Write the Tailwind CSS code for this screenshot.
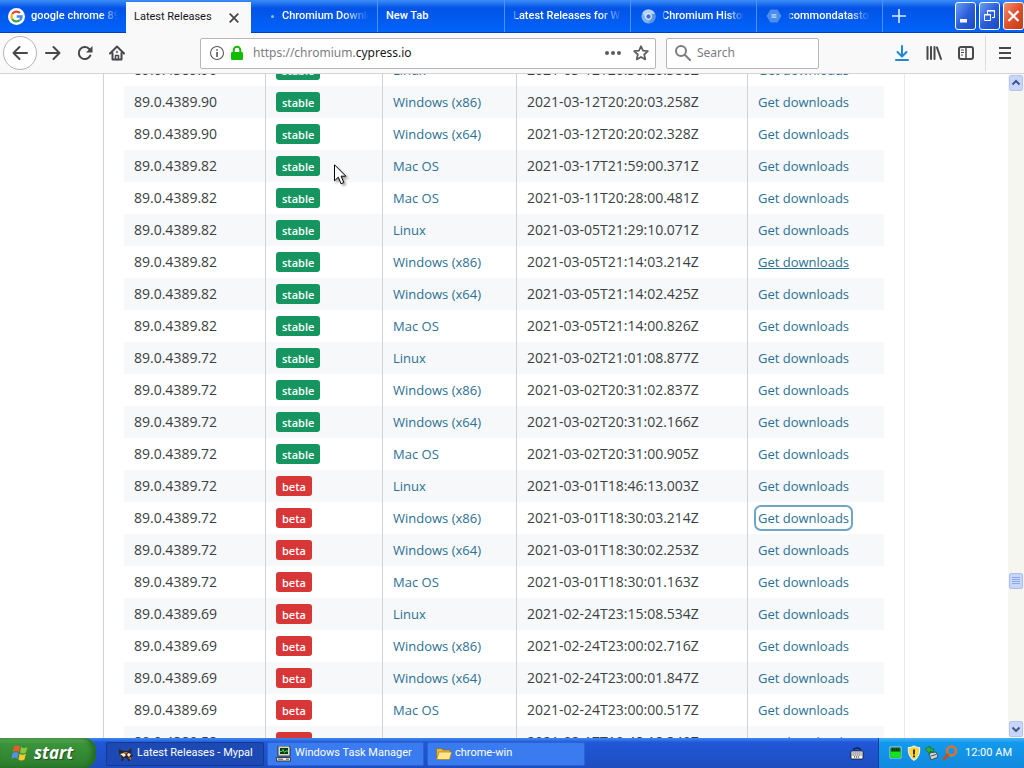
<!DOCTYPE html>
<html lang="en">
<head>
<meta charset="utf-8">
<title>Latest Releases</title>
<script src="https://cdn.jsdelivr.net/npm/@tailwindcss/browser@4"></script>
</head>
<body class="flex h-screen flex-col overflow-hidden bg-white font-['Noto_Sans',sans-serif]">

<header class="shrink-0">
  <!-- Tab strip -->
  <div class="flex h-[33px] items-stretch border-b border-[#0a3db0] bg-linear-to-b from-[#3a8cf8] via-[#0353e6] via-25% to-[#0263fa] text-[11px] text-white">
    <nav class="flex min-w-0 flex-1 font-['Roboto','Noto_Sans',sans-serif]" aria-label="Tabs">
      <a href="#" class="flex w-[126px] items-center gap-[6px] px-2 font-medium">
        <svg class="size-[17px] shrink-0" viewBox="0 0 17 17"><circle cx="8.500" cy="8.500" r="8.500" fill="#fff"/><g fill="none" stroke-width="2.300"><path d="M12 5A5 5 0 0 0 4.200 6" stroke="#ea4335"/><path d="M4.200 6a5 5 0 0 0 0 5" stroke="#fbbc05"/><path d="M4.200 11A5 5 0 0 0 12 12" stroke="#34a853"/><path d="M12 12a5 5 0 0 0 1.500-3.500H8.700" stroke="#4285f4"/></g></svg>
        <span class="overflow-hidden whitespace-nowrap [mask-image:linear-gradient(to_right,#000_80%,transparent)]">google chrome 89</span>
      </a>
      <a href="#" aria-current="page" class="mt-[2px] -mb-px flex w-[125px] items-center justify-between bg-[#f9f9fa] pr-3 pl-2 text-[#15141a]">
        <span class="whitespace-nowrap">Latest Releases</span>
        <svg class="size-[10px]" viewBox="0 0 10 10"><path d="M.7.7l8.600 8.600M9.300.7L.7 9.300" stroke="#444" stroke-width="1.700"/></svg>
      </a>
      <a href="#" class="flex w-[127px] items-center gap-2 border-r border-[#4b91f7] pr-2 pl-5 font-medium">
        <span class="size-[3px] shrink-0 rounded-full bg-[#8fc0ff]"></span>
        <span class="overflow-hidden whitespace-nowrap [mask-image:linear-gradient(to_right,#000_70%,transparent)]">Chromium Downloads</span>
      </a>
      <a href="#" class="flex w-[127px] items-center border-r border-[#4b91f7] px-2 font-medium">New Tab</a>
      <a href="#" class="flex w-[126px] items-center border-r border-[#4b91f7] px-2 font-medium">
        <span class="overflow-hidden whitespace-nowrap [mask-image:linear-gradient(to_right,transparent,#000_4%,#000_80%,transparent)]">Latest Releases for Windows</span>
      </a>
      <a href="#" class="flex w-[126px] items-center gap-[6px] border-r border-[#4b91f7] pr-3 pl-[10px] font-medium">
        <svg class="size-[15px] shrink-0" viewBox="0 0 15 15"><circle cx="7.500" cy="7.500" r="7" fill="#7fb2ee"/><path d="M1.500 4A7 7 0 0 1 14 5H7.500L5 9z" fill="#b3d2f6"/><path d="M14 5a7 7 0 0 1-7 9.500L10.500 9V5z" fill="#5b97e2"/><circle cx="7.500" cy="7.500" r="3.300" fill="#e8f2ff"/><circle cx="7.500" cy="7.500" r="2.200" fill="#3674d0"/></svg>
        <span class="overflow-hidden whitespace-nowrap [mask-image:linear-gradient(to_right,transparent,#000_5%,#000_80%,transparent)]">Chromium History</span>
      </a>
      <a href="#" class="flex w-[126px] items-center gap-[6px] border-r border-[#4b91f7] pr-3 pl-[9px] font-medium">
        <svg class="size-4 shrink-0" viewBox="0 0 16 16"><path d="M4.500 1.500h7L15.500 8l-4 6.500h-7L.5 8z" fill="#4a8dea"/><path d="M5.500 6.200h5v1.200h-5zM5.500 8.600h5v1.200h-5z" fill="#cfe2fb"/></svg>
        <span class="overflow-hidden whitespace-nowrap [mask-image:linear-gradient(to_right,transparent,#000_6%,#000_75%,transparent)]">commondatastorage</span>
      </a>
      <button aria-label="New tab" class="flex w-8 items-center justify-center"><svg class="size-[14px]" viewBox="0 0 14 14"><path d="M7 0v14M0 7h14" stroke="#dcebff" stroke-width="1.600"/></svg></button>
    </nav>
    <div class="flex items-start gap-[3px] pt-[2px]">
      <button aria-label="Minimize" class="h-7 w-[21px] rounded-[3px] border border-white bg-linear-to-br from-[#6f9cf5] via-[#2a5fdc] to-[#1b49bd]"><svg viewBox="0 0 19 26"><path d="M4 16h7v3.500H4z" fill="#fff"/></svg></button>
      <button aria-label="Restore" class="h-7 w-[21px] rounded-[3px] border border-white bg-linear-to-br from-[#6f9cf5] via-[#2a5fdc] to-[#1b49bd]"><svg viewBox="0 0 19 26" fill="none" stroke="#fff"><path d="M7.500 11V7.500h7v7H12M7 8h8M4.500 11.500h6v6h-6zM4 12h7"/></svg></button>
      <button aria-label="Close" class="h-7 w-[21px] rounded-[3px] border border-white bg-linear-to-br from-[#f0906e] via-[#e0502c] to-[#c43a17]"><svg viewBox="0 0 19 26"><path d="M4.500 8l10 10M14.500 8l-10 10" stroke="#fff" stroke-width="2.200"/></svg></button>
    </div>
  </div>

  <!-- Navigation toolbar -->
  <div class="flex h-[41px] items-center border-b border-[#d4d4d6] bg-[#f9f9fa] pl-[3px] text-[#48484b]">
    <button aria-label="Back" class="flex size-[34px] shrink-0 items-center justify-center rounded-full border border-[#b4b4b6] bg-white"><svg class="size-4" viewBox="0 0 16 16" fill="none" stroke="currentColor" stroke-width="2" stroke-linecap="round" stroke-linejoin="round"><path d="M15 8H1.500M7.500 2l-6 6 6 6"/></svg></button>
    <button aria-label="Forward" class="flex w-8 shrink-0 items-center justify-center"><svg class="size-4" viewBox="0 0 16 16" fill="none" stroke="currentColor" stroke-width="2" stroke-linecap="round" stroke-linejoin="round"><path d="M1 8h13.500M8.500 2l6 6-6 6"/></svg></button>
    <button aria-label="Reload" class="flex w-8 shrink-0 items-center justify-center"><svg class="size-4" viewBox="0 0 16 16" fill="none" stroke="currentColor" stroke-width="2" stroke-linecap="round"><path d="M13.300 10.500A6 6 0 1 1 12 3.800l1 1"/><path d="M15.500 1v6.500H9z" fill="currentColor" stroke="none"/></svg></button>
    <button aria-label="Home" class="flex w-8 shrink-0 items-center justify-center"><svg class="size-4" viewBox="0 0 16 16" fill="none" stroke="currentColor" stroke-width="2" stroke-linecap="round" stroke-linejoin="round"><path d="M1 8.500L8 1.500l7 7M3.500 8v6.500h9V8"/><path d="M6.500 14.500v-4h3v4zM8 6.500v1" stroke-width="1.500"/></svg></button>

    <div class="ml-[67px] flex h-[31px] min-w-0 flex-1 items-center rounded-[2px] border border-[#b7b7ba] bg-white pr-[6px] pl-2">
      <svg class="size-4 shrink-0" viewBox="0 0 16 16"><circle cx="8" cy="8" r="6.500" fill="none" stroke="#5c5c5f" stroke-width="1.100"/><path d="M7.200 7h1.700v5H7.200zM7.200 4.200h1.700v1.600H7.200z" fill="#5c5c5f"/></svg>
      <svg class="ml-1 size-4 shrink-0" viewBox="0 0 16 16"><path d="M4.700 8V5a3.300 3.300 0 0 1 6.600 0v3" fill="none" stroke="#12bc00" stroke-width="2"/><rect x="2" y="7" width="12" height="8" rx="1.200" fill="#12bc00"/></svg>
      <div role="textbox" aria-label="Address" class="ml-2 flex-1 text-[12px] whitespace-nowrap text-[#7c7c80]">https://chromium.<span class="text-[#18181a]">cypress.io</span></div>
      <button aria-label="Page actions"><svg class="h-4 w-4" viewBox="0 0 16 16" fill="#5c5c5f"><circle cx="2" cy="8" r="2"/><circle cx="8" cy="8" r="2"/><circle cx="14" cy="8" r="2"/></svg></button>
      <button aria-label="Bookmark this page" class="ml-3"><svg class="size-4" viewBox="0 0 16 16" fill="none" stroke="#5c5c5f" stroke-width="1.700" stroke-linejoin="round"><path d="M8 1.200l2 4.500 4.900.5-3.700 3.300 1.100 4.900L8 11.900l-4.300 2.500 1.100-4.900L1.100 6.200 6 5.700z"/></svg></button>
    </div>
    <label class="ml-[10px] flex h-[31px] w-[153px] items-center gap-[6px] rounded-[2px] border border-[#b7b7ba] bg-white px-2">
      <svg class="size-4 shrink-0" viewBox="0 0 16 16" fill="none" stroke="#7c7c80" stroke-width="2" stroke-linecap="round"><circle cx="6" cy="6" r="5"/><path d="M10 10l5 5"/></svg>
      <input type="search" aria-label="Search" placeholder="Search" class="min-w-0 flex-1 text-[12px] placeholder:text-[#7c7c80]">
    </label>
    <div class="ml-[67px] flex shrink-0 items-center">
      <button aria-label="Downloads" class="flex w-8 justify-center"><svg class="size-4" viewBox="0 0 16 16" fill="none" stroke="#1f86d8" stroke-width="2" stroke-linecap="round" stroke-linejoin="round"><path d="M8 1v10M3.500 7L8 11.500 12.500 7M2 15h12"/></svg></button>
      <button aria-label="Library" class="flex w-8 justify-center"><svg class="size-4" viewBox="0 0 16 16" fill="none" stroke="currentColor" stroke-width="2" stroke-linecap="round"><path d="M1.500 2v12M5 2v12M8.500 2v12M11 2.500L15 14"/></svg></button>
      <button aria-label="Sidebars" class="flex w-8 justify-center"><svg class="size-4" viewBox="0 0 16 16" fill="none" stroke="currentColor"><rect x="1" y="2" width="14" height="12" rx="2" stroke-width="2"/><path d="M8 2v12" stroke-width="1.500"/><path d="M3 5h3M3 7.500h3M3 10h2"/></svg></button>
      <div class="ml-[3px] h-9 w-px bg-[#dcdcde]"></div>
      <button aria-label="Menu" class="flex w-[38px] justify-center"><svg class="size-4" viewBox="0 0 16 16"><path d="M2 3h12M2 8h12M2 13h12" stroke="currentColor" stroke-width="2"/></svg></button>
    </div>
  </div>
</header>

<div class="flex min-h-0 flex-1">
  <main class="min-w-0 flex-1 overflow-hidden">
    <div class="mx-auto max-w-[802px] border-r border-l border-r-[#e8eaec] border-l-[#d0d3d6] px-5">
      <table class="-mt-5 w-full table-fixed border-separate border-spacing-0 text-left text-[14px] leading-[18px] text-[#3a3f44] font-['Open_Sans','Noto_Sans',sans-serif]">
        <colgroup><col class="w-[142px]"><col class="w-[117px]"><col class="w-[134px]"><col class="w-[231px]"><col></colgroup>
        <tbody id="releases"></tbody>
      </table>
    </div>
  </main>
  <!-- Scrollbar -->
  <div class="flex w-4 flex-col items-center bg-[#f6f6f1] py-px" aria-hidden="true">
    <div class="flex h-4 w-[14px] items-center justify-center rounded-[2px] border border-[#b4c6f0] bg-[#c8d6fb]"><svg class="size-[10px]" viewBox="0 0 10 10"><path d="M1.500 6.500L5 3l3.500 3.500" fill="none" stroke="#42598c" stroke-width="2"/></svg></div>
    <div class="flex-[482]"></div>
    <div class="flex h-4 w-[14px] items-center justify-center rounded-[2px] border border-[#a9bdf0] bg-[#c8d6fb]"><svg class="size-2" viewBox="0 0 8 8"><path d="M0 .5h8M0 2.500h8M0 4.500h8M0 6.500h8" stroke="#8fa8e6"/></svg></div>
    <div class="flex-[132]"></div>
    <div class="flex h-4 w-[14px] items-center justify-center rounded-[2px] border border-[#b4c6f0] bg-[#c8d6fb]"><svg class="size-[10px]" viewBox="0 0 10 10"><path d="M1.500 3.500L5 7l3.500-3.500" fill="none" stroke="#42598c" stroke-width="2"/></svg></div>
  </div>
</div>

<!-- Taskbar -->
<footer class="flex h-[30px] shrink-0 items-stretch bg-linear-to-b from-[#3f86f2] via-[#2157d7] via-15% to-[#1d4dbf] text-[11px] text-white font-['Roboto','Noto_Sans',sans-serif]">
  <button class="flex w-24 items-center gap-[5px] rounded-r-xl bg-linear-to-b from-[#62b35f] via-[#3a943a] via-20% to-[#2c7d2c] pl-[11px] shadow-[inset_-4px_0_5px_#236b24]">
    <svg class="size-[18px]" viewBox="0 0 18 18"><path d="M3 2.500q3-2 6 0L7.800 8q-3-2-6 0z" fill="#f0582c"/><path d="M10 3q3 2 6.500 0L15 8.500q-3 2-6 0z" fill="#8cc63f"/><path d="M1.600 9.200q3-2 6 0l-1.300 5.600q-3-2-6 0z" fill="#5b8df0"/><path d="M8.700 9.700q3 2 6.200 0l-1.400 5.800q-3 2-6.100 0z" fill="#fbc72e"/></svg>
    <span class="pb-px text-[17px] leading-none font-bold italic text-shadow-[1px_1px_1px_#1c4f1c] font-['Open_Sans',sans-serif]">start</span>
  </button>
  <nav class="flex min-w-0 flex-1 items-center gap-[3px] pt-px pl-[10px]" aria-label="Windows">
    <button class="flex h-6 w-[158px] items-center gap-[3px] rounded-[2px] border border-[#123a92] bg-[#1c49b4] pl-[11px]">
      <svg class="size-4 shrink-0" viewBox="0 0 16 16"><path d="M1 3l4 2h5l4-3-1 5 2 3-3 2v3h-2l-1-3H6l-1 3H3l1-4-3-3z" fill="#33241c"/><path d="M2 8l4-1 2 2-2 2zM10 7l3 1-2 3-2-2z" fill="#f3eee8"/><path d="M5 6l5 0-2 2zM10 12l3-1v3z" fill="#b76a32"/></svg>
      <span class="whitespace-nowrap">Latest Releases - Mypal</span>
    </button>
    <button class="flex h-6 w-[157px] items-center gap-[3px] rounded-[2px] border border-[#2a63d8] bg-[#3a7cf0] pl-[8px]">
      <svg class="size-4 shrink-0" viewBox="0 0 16 16"><path d="M2 0h11l1 1v9H2z" fill="#ded9c8" stroke="#222" stroke-width=".8"/><path d="M4 2h8v6H4z" fill="#073b15"/><path d="M4 5.500h2l1-2 1.500 3L10 5h2" fill="none" stroke="#52d767"/><path d="M.5 11.500h14v3.500H.5z" fill="#e9e6da" stroke="#222" stroke-width=".8"/><path d="M2 13.200h5M10 13.200h3" stroke="#555"/></svg>
      <span class="whitespace-nowrap">Windows Task Manager</span>
    </button>
    <button class="flex h-6 w-[158px] items-center gap-[3px] rounded-[2px] border border-[#2a63d8] bg-[#3a7cf0] pl-[8px]">
      <svg class="size-4 shrink-0" viewBox="0 0 16 16"><path d="M.5 13V3.500l1-1h4l1.500 1.500h7v9z" fill="#e6b63f" stroke="#8a6a1a" stroke-width=".7"/><path d="M3 6h12.700L13.500 13.500H.7z" fill="#fde68a" stroke="#a37e22" stroke-width=".7"/></svg>
      <span class="whitespace-nowrap">chrome-win</span>
    </button>
  </nav>
  <div class="flex w-10 items-center pl-[13px]"><svg class="h-3 w-3 overflow-visible" viewBox="0 0 12 12"><path d="M2 2.500q4-3 8 0" fill="none" stroke="#0b1d52" stroke-width="1.500"/><rect x="0" y="4" width="12" height="8" rx="1" fill="#fff" stroke="#111" stroke-width=".8"/><path d="M1.500 6h9M1.500 8h9M3 10h6" stroke="#111" stroke-dasharray="1.200 .8"/></svg></div>
  <div class="flex w-[146px] items-center gap-[2px] border-l border-[#0b3f9c] bg-linear-to-b from-[#46b4f8] via-[#129aec] via-15% to-[#1389df] pr-3 pl-[9px]">
    <svg class="size-4" viewBox="0 0 16 16"><path d="M2 2h11v11H2z" fill="#083c0c" stroke="#c9f0ff" stroke-width=".8"/><path d="M2.400 6.500h10.200v6.100H2.400z" fill="#10e818"/><path d="M3 3.500h9M3 5h9" stroke="#127a1c" stroke-dasharray="1 1"/></svg>
    <svg class="size-4" viewBox="0 0 16 16"><path d="M8 1q3 2 5.500 1.500Q14.500 11 8 15.300 1.500 11 2.500 2.500 5 3 8 1z" fill="#fbd737" stroke="#e9edf2" stroke-width="1.200"/><path d="M7.100 4.500h1.800v5H7.100zM7.100 10.500h1.800v1.800H7.100z" fill="#2a2310"/></svg>
    <svg class="size-4" viewBox="0 0 16 16"><path d="M5 8l7-1 2 5-7 3z" fill="#cfd8d8" stroke="#41525c"/><path d="M7 11l5-1.500" stroke="#41525c"/><path d="M1 4l5-3v2l4 1-1 3-3-1v3z" fill="#2fae3b" stroke="#156b1f" stroke-width=".7"/></svg>
    <svg class="size-4" viewBox="0 0 16 16" fill="none"><circle cx="9.500" cy="6" r="4.500" stroke="#e8711c" stroke-width="2.400"/><path d="M6.300 9.300L1.300 14.500" stroke="#c4540c" stroke-width="3"/></svg>
    <span class="ml-auto whitespace-nowrap">12:00 AM</span>
  </div>
</footer>

<!-- Mouse pointer -->
<svg class="pointer-events-none absolute top-[164px] left-[334px] h-[22px] w-[14px] drop-shadow-[2px_2px_1px_rgba(0,0,0,0.35)]" viewBox="0 0 14 22" aria-hidden="true"><path d="M.5.8v16l3.800-3.600 2.700 6.500 2.800-1.200-2.700-6.300h4.800z" fill="#fff" stroke="#000"/></svg>

<script>
const releases = [
  ['90', 'stable', 'Linux', '2021-03-12T20:38:20.388Z'],
  ['90', 'stable', 'Windows (x86)', '2021-03-12T20:20:03.258Z'],
  ['90', 'stable', 'Windows (x64)', '2021-03-12T20:20:02.328Z'],
  ['82', 'stable', 'Mac OS', '2021-03-17T21:59:00.371Z'],
  ['82', 'stable', 'Mac OS', '2021-03-11T20:28:00.481Z'],
  ['82', 'stable', 'Linux', '2021-03-05T21:29:10.071Z'],
  ['82', 'stable', 'Windows (x86)', '2021-03-05T21:14:03.214Z', 'underline'],
  ['82', 'stable', 'Windows (x64)', '2021-03-05T21:14:02.425Z'],
  ['82', 'stable', 'Mac OS', '2021-03-05T21:14:00.826Z'],
  ['72', 'stable', 'Linux', '2021-03-02T21:01:08.877Z'],
  ['72', 'stable', 'Windows (x86)', '2021-03-02T20:31:02.837Z'],
  ['72', 'stable', 'Windows (x64)', '2021-03-02T20:31:02.166Z'],
  ['72', 'stable', 'Mac OS', '2021-03-02T20:31:00.905Z'],
  ['72', 'beta', 'Linux', '2021-03-01T18:46:13.003Z'],
  ['72', 'beta', 'Windows (x86)', '2021-03-01T18:30:03.214Z', 'rounded-[3px] outline-2 outline-offset-2 outline-[#6fa6c8]'],
  ['72', 'beta', 'Windows (x64)', '2021-03-01T18:30:02.253Z'],
  ['72', 'beta', 'Mac OS', '2021-03-01T18:30:01.163Z'],
  ['69', 'beta', 'Linux', '2021-02-24T23:15:08.534Z'],
  ['69', 'beta', 'Windows (x86)', '2021-02-24T23:00:02.716Z'],
  ['69', 'beta', 'Windows (x64)', '2021-02-24T23:00:01.847Z'],
  ['69', 'beta', 'Mac OS', '2021-02-24T23:00:00.517Z'],
  ['58', 'beta', 'Linux', '2021-02-17T19:48:18.349Z'],
];
const badge = { stable: 'bg-[#159661]', beta: 'bg-[#d93638]' };
document.getElementById('releases').innerHTML = releases.map(([build, channel, os, time, state = '']) => `
  <tr class="h-8 even:bg-[#f6f8fa]">
    <td class="border-r border-[#d0d3d6] px-[10px]">89.0.4389.${build}</td>
    <td class="border-r border-[#d0d3d6] px-[10px]"><span class="${badge[channel]} flex h-5 w-fit items-center rounded-[3px] px-[6px] pt-px text-[11px] font-semibold text-white">${channel}</span></td>
    <td class="border-r border-[#d0d3d6] px-[10px] text-[13px]"><a href="#" class="block w-fit text-[#2b7194]">${os}</a></td>
    <td class="border-r border-[#d0d3d6] px-[10px] whitespace-nowrap">${time}</td>
    <td class="px-[10px] text-[13px] whitespace-nowrap"><a href="#" class="block w-fit text-[#2b7194] ${state}">Get downloads</a></td>
  </tr>`).join('');
</script>
</body>
</html>
